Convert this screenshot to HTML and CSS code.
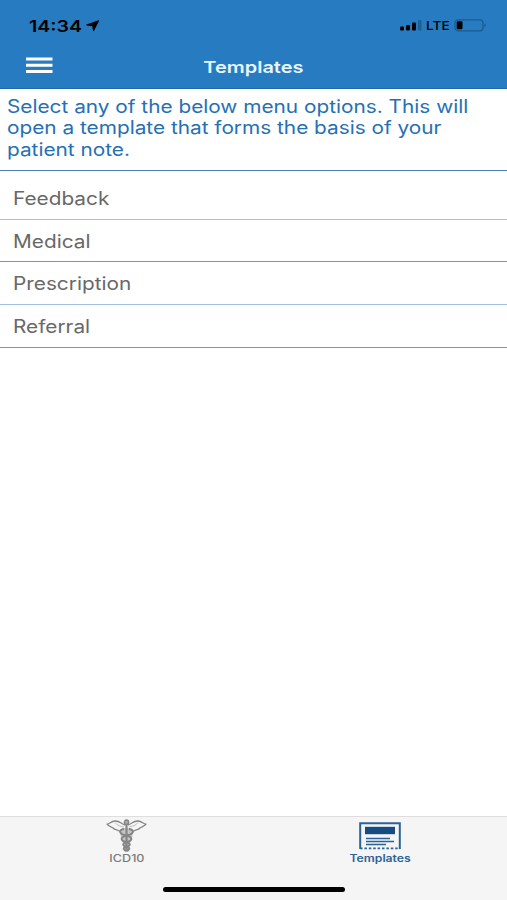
FILE: index.html
```html
<!DOCTYPE html>
<html lang="en">
<head>
<meta charset="utf-8">
<title>Templates</title>
<link rel="stylesheet" href="styles.css">
</head>
<body>
<header class="top">
  <div class="status">
    <div class="clock"><span class="time">14:34</span>
      <svg class="arrow" width="14" height="12" viewBox="0 0 14 12"><path d="M13.200.6Q13.400 0 12.600.3L.5 4.600Q-.2 5.200.6 5.600L6.300 6.200 7 10.800Q7.400 11.600 8.100 10.800Z"/></svg>
    </div>
    <div class="signals">
      <svg class="bars" width="22" height="11" viewBox="0 0 22 11"><rect y="6.5" width="4" height="4" rx="1"/><rect x="6" y="5" width="4" height="5.5" rx="1"/><rect x="12" y="2.5" width="4" height="8" rx="1"/><rect x="18" y="0" width="3.5" height="10.5" rx="1" opacity=".22"/></svg>
      <span class="lte">LTE</span>
      <svg width="33" height="13" viewBox="0 0 33 13"><rect x="1" y=".8" width="28" height="11" rx="3" fill="none" stroke="#1b5a91" stroke-width="1.2"/><rect x="2.7" y="2.3" width="5.8" height="8" rx="1.2"/><path d="M30.4 4.500q3 1.900 0 3.800z" fill="#1b5a91"/></svg>
    </div>
  </div>
  <div class="nav">
    <svg class="menu" width="27" height="17" viewBox="0 0 27 17"><path d="M0 2h26.500M0 8.300h26.500M0 14.500h26.500" stroke="#fff" stroke-width="3"/></svg>
    <h1>Templates</h1>
  </div>
</header>
<main>
  <p class="intro"><span>Select any of the below menu options. This will<br>open a template that forms the basis of your<br>patient note.</span></p>
  <ul class="list">
    <li><span>Feedback</span></li>
    <li><span>Medical</span></li>
    <li><span>Prescription</span></li>
    <li><span>Referral</span></li>
  </ul>
</main>
<footer class="tabs">
  <div class="tab">
    <svg width="42" height="34" viewBox="0 0 42 34" fill="none" stroke="#858585" stroke-width="1.300" stroke-linejoin="round">
      <path d="M19 6C15 5 14 1.800 9 2 5 2.300 4 4.800 1 5.200 3 8 6 7.500 7 9c2 2.200 5 1.500 6 3 2 .8 3 .5 5 0M22 6c4-1 5-4.200 10-4 4 .3 5 2.800 8 3.200-2 2.800-5 2.300-6 3.800-2 2.200-5 1.500-6 3-2 .8-3 .5-5 0"/>
      <path d="M9 3.500c2 3 6 4 9 4.500M32 3.500c-2 3-6 4-9 4.500" stroke-width=".7" stroke="#a5a5a5"/>
      <circle cx="20.500" cy="3.200" r="2.200" fill="#aaa"/>
      <path d="M13.500 11 17 9h7l3.500 2-1.500 8-2 5-1.500 8.500h-4L17 24l-2-5z" fill="#c6c6c6" stroke="none"/>
      <path d="M20.500 6v26.500" stroke-width="2.200"/>
      <path d="M18 10c-6 1-5 5 2 6.500s7 5 1 6.500-4 4 0 5 2 3 0 4M23 10c6 1 5 5-2 6.500s-7 5-1 6.500 4 4 0 5-2 3 0 4" stroke-width="1.900"/>
    </svg>
    <span class="label">ICD10</span>
  </div>
  <div class="tab active">
    <svg width="42" height="28" viewBox="0 0 42 28" fill="none" stroke="#2b6397">
      <path d="M1.200 27V1.200h39.600V27" stroke-width="2"/>
      <path d="M1 26.300h40" stroke-width="1.800" stroke-dasharray="2.500 1.900"/>
      <rect x="6" y="4.800" width="30" height="7.400" fill="#154c82" stroke="none"/>
      <path d="M7 16.500h24M7 19.500h28M7 22.500h20" stroke-width="1.700"/>
    </svg>
    <span class="label">Templates</span>
  </div>
  <div class="home"></div>
</footer>
</body>
</html>
```

FILE: styles.css
```css
* { box-sizing: border-box; }
body {
  margin: 0;
  height: 900px;
  display: flex;
  flex-direction: column;
  background: #fff;
  font-family: Inter, "Liberation Sans", sans-serif;
  overflow: hidden;
}
.top {
  height: 89px;
  background: #277bc1;
  border-bottom: 1px solid #2069ab;
}
.status {
  height: 51px;
  padding: 0 20px 0 29px;
  display: flex;
  justify-content: space-between;
  align-items: center;
}
.clock, .signals { display: flex; align-items: center; }
.time {
  width: 57px;
  font-size: 16px;
  font-weight: 600;
  transform: scaleX(1.22);
  transform-origin: left;
}
.lte {
  width: 28px;
  margin-left: 4px;
  font-size: 12px;
  font-weight: 500;
  transform: scaleX(1.14);
  transform-origin: left;
}
.nav {
  display: grid;
  grid-template-columns: 1fr auto 1fr;
  align-items: center;
  height: 32px;
}
.menu { margin: -4px 0 0 26px; }
.nav h1 {
  margin: 0;
  font-size: 16.5px;
  line-height: 20px;
  font-weight: 600;
  color: #e9f5ff;
  transform: scaleX(1.21);
}
.intro {
  margin: 0;
  height: 82px;
  padding: 7px 7px 0;
  border-bottom: 1px solid #4a80b8;
  color: #2570b5;
  font-size: 18px;
  line-height: 21.300px;
  white-space: nowrap;
}
.intro span {
  display: inline-block;
  transform: scaleX(1.155);
  transform-origin: left;
}
.list { margin: 0; padding: 6px 0 0; list-style: none; }
.list li {
  height: 42.700px;
  padding: 1px 0 0 13px;
  display: flex;
  align-items: center;
  border-bottom: 1px solid #a5bfe0;
  color: #686868;
  font-size: 18px;
}
.list li:nth-child(even) { border-color: #7893cc; }
.list span { transform: scaleX(1.155); transform-origin: left; }
.tabs {
  margin-top: auto;
  height: 84px;
  position: relative;
  display: grid;
  grid-template-columns: 1fr 1fr;
  background: #f5f5f5;
  border-top: 1px solid #dedede;
}
.tab {
  display: flex;
  flex-direction: column;
  align-items: center;
  padding-top: 2px;
  color: #7c7c7c;
}
.tab.active { color: #2b6397; padding-top: 5px; }
.label {
  margin-top: -1px;
  font-size: 10px;
  line-height: 12px;
  font-weight: 500;
  transform: scaleX(1.26);
}
.active .label { margin-top: 2px; font-weight: 600; transform: scaleX(1.22); }
.home {
  position: absolute;
  left: 163px;
  bottom: 8px;
  width: 182px;
  height: 5px;
  border-radius: 3px;
  background: #000;
}
```
